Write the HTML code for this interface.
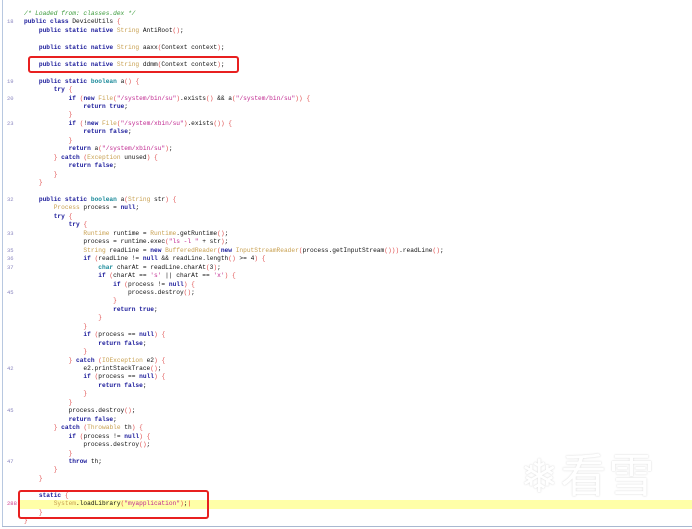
<!DOCTYPE html>
<html><head><meta charset="utf-8"><style>
html,body{margin:0;padding:0;background:#fff;width:692px;height:529px;overflow:hidden;position:relative}
#code{position:absolute;left:0;top:10px;margin:0;font-family:"Liberation Mono",monospace;font-size:6.2px;line-height:8.45px;color:#111;white-space:pre}
.ln{display:inline-block;width:24px;padding-left:7px;box-sizing:border-box;color:#8a86c0;font-size:5.5px}
.k{color:#1a1a9a;font-weight:bold}
.t{color:#c8a050}
.b{color:#e05050}
.s{color:#c02890}
.c{color:#3a9a3a;font-style:italic}
.p{color:#1a8a9a;font-weight:bold}
.hl{position:absolute;left:18px;top:500px;width:674px;height:9px;background:#ffffa8}
.box{position:absolute;border:2px solid #e82020;border-radius:3px}
.vl{position:absolute;left:2px;top:0;width:1px;height:527px;background:#b8c8e0}
.bl{position:absolute;left:2px;top:526px;width:690px;height:1px;background:#a8b8d0}
.wm{position:absolute;left:520px;top:440px;font-family:"Noto Sans CJK SC",sans-serif;color:#fff;text-shadow:0 0 1px #d8d8d8,0 0 2px #e4e4e4;font-size:46px;letter-spacing:2px;white-space:nowrap}
</style></head><body>
<div class="vl"></div><div class="bl"></div>
<div class="hl"></div>
<pre id="code"><span class="ln"></span><span class="c">/* Loaded from: classes.dex */</span>
<span class="ln">18</span><span class="k">public class</span> DeviceUtils <span class="b">{</span>
<span class="ln"></span>    <span class="k">public static native</span> <span class="t">String</span> AntiRoot<span class="b">()</span>;
<span class="ln"></span>
<span class="ln"></span>    <span class="k">public static native</span> <span class="t">String</span> aaxx<span class="b">(</span>Context context<span class="b">)</span>;
<span class="ln"></span>
<span class="ln"></span>    <span class="k">public static native</span> <span class="t">String</span> ddmm<span class="b">(</span>Context context<span class="b">)</span>;
<span class="ln"></span>
<span class="ln">19</span>    <span class="k">public static</span> <span class="p">boolean</span> a<span class="b">()</span> <span class="b">{</span>
<span class="ln"></span>        <span class="k">try</span> <span class="b">{</span>
<span class="ln">20</span>            <span class="k">if</span> <span class="b">(</span><span class="k">new</span> <span class="t">File</span><span class="b">(</span><span class="s">"/system/bin/su"</span><span class="b">)</span>.exists<span class="b">()</span> &amp;&amp; a<span class="b">(</span><span class="s">"/system/bin/su"</span><span class="b">))</span> <span class="b">{</span>
<span class="ln"></span>                <span class="k">return true</span>;
<span class="ln"></span>            <span class="b">}</span>
<span class="ln">23</span>            <span class="k">if</span> <span class="b">(</span>!<span class="k">new</span> <span class="t">File</span><span class="b">(</span><span class="s">"/system/xbin/su"</span><span class="b">)</span>.exists<span class="b">())</span> <span class="b">{</span>
<span class="ln"></span>                <span class="k">return false</span>;
<span class="ln"></span>            <span class="b">}</span>
<span class="ln"></span>            <span class="k">return</span> a<span class="b">(</span><span class="s">"/system/xbin/su"</span><span class="b">)</span>;
<span class="ln"></span>        <span class="b">}</span> <span class="k">catch</span> <span class="b">(</span><span class="t">Exception</span> unused<span class="b">)</span> <span class="b">{</span>
<span class="ln"></span>            <span class="k">return false</span>;
<span class="ln"></span>        <span class="b">}</span>
<span class="ln"></span>    <span class="b">}</span>
<span class="ln"></span>
<span class="ln">32</span>    <span class="k">public static</span> <span class="p">boolean</span> a<span class="b">(</span><span class="t">String</span> str<span class="b">)</span> <span class="b">{</span>
<span class="ln"></span>        <span class="t">Process</span> process = <span class="k">null</span>;
<span class="ln"></span>        <span class="k">try</span> <span class="b">{</span>
<span class="ln"></span>            <span class="k">try</span> <span class="b">{</span>
<span class="ln">33</span>                <span class="t">Runtime</span> runtime = <span class="t">Runtime</span>.getRuntime<span class="b">()</span>;
<span class="ln"></span>                process = runtime.exec<span class="b">(</span><span class="s">"ls -l "</span> + str<span class="b">)</span>;
<span class="ln">35</span>                <span class="t">String</span> readLine = <span class="k">new</span> <span class="t">BufferedReader</span><span class="b">(</span><span class="k">new</span> <span class="t">InputStreamReader</span><span class="b">(</span>process.getInputStream<span class="b">()))</span>.readLine<span class="b">()</span>;
<span class="ln">36</span>                <span class="k">if</span> <span class="b">(</span>readLine != <span class="k">null</span> &amp;&amp; readLine.length<span class="b">()</span> &gt;= 4<span class="b">)</span> <span class="b">{</span>
<span class="ln">37</span>                    <span class="p">char</span> charAt = readLine.charAt<span class="b">(</span>3<span class="b">)</span>;
<span class="ln"></span>                    <span class="k">if</span> <span class="b">(</span>charAt == <span class="s">'s'</span> || charAt == <span class="s">'x'</span><span class="b">)</span> <span class="b">{</span>
<span class="ln"></span>                        <span class="k">if</span> <span class="b">(</span>process != <span class="k">null</span><span class="b">)</span> <span class="b">{</span>
<span class="ln">45</span>                            process.destroy<span class="b">()</span>;
<span class="ln"></span>                        <span class="b">}</span>
<span class="ln"></span>                        <span class="k">return true</span>;
<span class="ln"></span>                    <span class="b">}</span>
<span class="ln"></span>                <span class="b">}</span>
<span class="ln"></span>                <span class="k">if</span> <span class="b">(</span>process == <span class="k">null</span><span class="b">)</span> <span class="b">{</span>
<span class="ln"></span>                    <span class="k">return false</span>;
<span class="ln"></span>                <span class="b">}</span>
<span class="ln"></span>            <span class="b">}</span> <span class="k">catch</span> <span class="b">(</span><span class="t">IOException</span> e2<span class="b">)</span> <span class="b">{</span>
<span class="ln">42</span>                e2.printStackTrace<span class="b">()</span>;
<span class="ln"></span>                <span class="k">if</span> <span class="b">(</span>process == <span class="k">null</span><span class="b">)</span> <span class="b">{</span>
<span class="ln"></span>                    <span class="k">return false</span>;
<span class="ln"></span>                <span class="b">}</span>
<span class="ln"></span>            <span class="b">}</span>
<span class="ln">45</span>            process.destroy<span class="b">()</span>;
<span class="ln"></span>            <span class="k">return false</span>;
<span class="ln"></span>        <span class="b">}</span> <span class="k">catch</span> <span class="b">(</span><span class="t">Throwable</span> th<span class="b">)</span> <span class="b">{</span>
<span class="ln"></span>            <span class="k">if</span> <span class="b">(</span>process != <span class="k">null</span><span class="b">)</span> <span class="b">{</span>
<span class="ln"></span>                process.destroy<span class="b">()</span>;
<span class="ln"></span>            <span class="b">}</span>
<span class="ln">47</span>            <span class="k">throw</span> th;
<span class="ln"></span>        <span class="b">}</span>
<span class="ln"></span>    <span class="b">}</span>
<span class="ln"></span>
<span class="ln"></span>    <span class="k">static</span> <span class="b">{</span>
<span class="ln" style="color:#d04090">288</span>        <span class="t">System</span>.loadLibrary<span class="b">(</span><span class="s">"myapplication"</span><span class="b">)</span>;<span style="color:#e02020">|</span>
<span class="ln"></span>    <span class="b">}</span>
<span class="ln"></span><span class="b">}</span></pre>
<div class="box" style="left:28px;top:56px;width:207px;height:13px"></div>
<div class="box" style="left:18px;top:490px;width:187px;height:25px"></div>
<div class="wm">❄看雪</div>
</body></html>
